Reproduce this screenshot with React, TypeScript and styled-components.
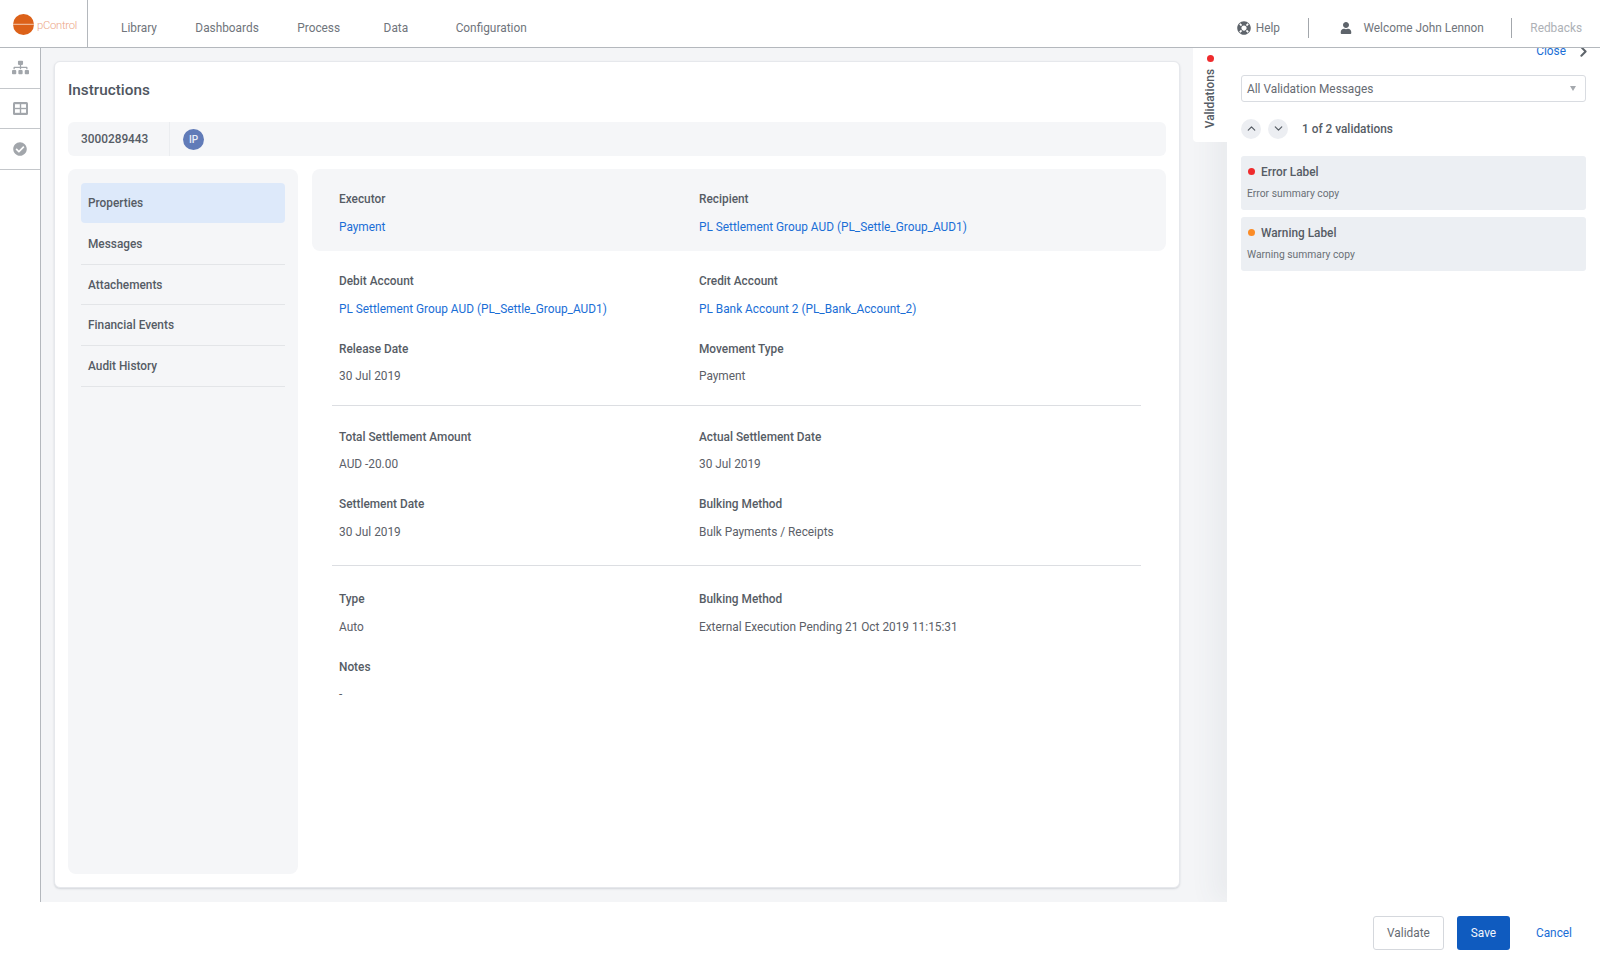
import React from 'react';
import styled, { createGlobalStyle } from 'styled-components';
import { FaSitemap, FaCheckCircle, FaLifeRing, FaUser } from 'react-icons/fa';
import { ChevronUp, ChevronDown, ChevronRight } from 'lucide-react';

const GlobalStyle = createGlobalStyle`
  html, body, #root {
    height: 100%;
    margin: 0;
  }
  body {
    font-family: Roboto, "Liberation Sans", sans-serif;
    font-size: 11.85px;
    color: #565c65;
    overflow: hidden;
  }
  * {
    box-sizing: border-box;
  }
`;

const Page = styled.div`
  display: flex;
  flex-direction: column;
  height: 963px;
  background: #fff;
`;

const Header = styled.header`
  display: flex;
  align-items: stretch;
  flex: 0 0 48px;
  background: #fff;
  border-bottom: 1.5px solid #b4b8bd;
  position: relative;
  z-index: 3;
`;

const LogoBlock = styled.div`
  display: flex;
  align-items: center;
  gap: 3px;
  width: 88px;
  padding: 1px 0 0 13px;
  border-right: 1px solid #b4b8bd;
`;

const LogoText = styled.span`
  font-size: 11.3px;
  letter-spacing: -0.3px;
  font-weight: 300;
  color: #eca585;
  margin-top: 3px;
`;

const Nav = styled.nav`
  display: flex;
  align-items: center;
  gap: 38.5px;
  padding: 8px 0 0 33px;
  flex: 1;
`;

const NavLink = styled.span<{ $wide?: boolean }>`
  color: #70757c;
  margin: ${(p) => (p.$wide ? '0 9px 0 5px' : '0')};
`;

const HeaderRight = styled.div`
  display: flex;
  align-items: center;
  padding: 8px 18px 0 0;
`;

const HelpLink = styled.span`
  display: flex;
  align-items: center;
  gap: 5px;
  color: #70757c;
  svg {
    color: #5e646b;
  }
`;

const HeaderDivider = styled.span<{ $gap: number; $before: number }>`
  width: 1.5px;
  height: 20px;
  background: #a3a7ac;
  margin: 0 ${(p) => p.$gap}px 0 ${(p) => p.$before}px;
`;

const UserLink = styled.span`
  display: flex;
  align-items: center;
  gap: 11px;
  color: #70757c;
  svg {
    color: #5e646b;
  }
`;

const Redbacks = styled.span`
  color: #adb1b6;
`;

const Body = styled.div`
  display: flex;
  flex: 1;
  min-height: 0;
`;

const Sidebar = styled.aside`
  flex: 0 0 41px;
  background: #fff;
  border-right: 1.5px solid #b4b8bd;
`;

const SideItem = styled.div`
  display: flex;
  align-items: center;
  justify-content: center;
  height: 40.5px;
  border-bottom: 1.5px solid #c4c7cb;
  color: #a2a6ab;
`;

const Main = styled.main`
  display: flex;
  flex: 1;
  gap: 13px;
  padding-left: 13px;
  background: #f4f5f7;
  min-width: 0;
`;

const Card = styled.section`
  display: flex;
  flex-direction: column;
  flex: 1;
  margin: 13px 0 14px;
  padding: 0 13px 13px;
  background: #fff;
  border: 1px solid #e6e8ec;
  border-radius: 6px;
  box-shadow: 0 1px 2px rgba(60, 70, 90, 0.18);
`;

const Title = styled.h1`
  margin: 13px 0 17px;
  font-size: 15.3px;
  line-height: 30px;
  font-weight: 500;
  color: #4f565f;
`;

const IdStrip = styled.div`
  display: flex;
  align-items: center;
  height: 34px;
  background: #f5f6f8;
  border-radius: 6px;
  margin-bottom: 13px;
`;

const IdCell = styled.div`
  display: flex;
  align-items: center;
  width: 102px;
  height: 100%;
  padding-left: 13px;
  border-right: 1px solid #ebedf0;
  font-weight: 500;
`;

const Badge = styled.span`
  display: flex;
  align-items: center;
  justify-content: center;
  width: 21px;
  height: 21px;
  margin-left: 13px;
  border-radius: 50%;
  background: #617bb8;
  color: #e9edf6;
  font-size: 10px;
  font-weight: 500;
`;

const Columns = styled.div`
  display: flex;
  flex: 1;
  gap: 14px;
  min-height: 0;
`;

const TabPanel = styled.div`
  flex: 0 0 230px;
  padding: 14px 13px;
  background: #f5f6f8;
  border-radius: 8px;
`;

const TabItem = styled.div<{ $active?: boolean }>`
  display: flex;
  align-items: center;
  height: ${(p) => (p.$active ? 40 : 40.7)}px;
  margin-bottom: ${(p) => (p.$active ? 1 : 0)}px;
  padding-left: 7px;
  font-weight: 500;
  background: ${(p) => (p.$active ? '#dde9fa' : 'transparent')};
  border-radius: ${(p) => (p.$active ? 4 : 0)}px;
  border-bottom: ${(p) => (p.$active ? 'none' : '1px solid #e3e5e8')};
`;

const Details = styled.div`
  flex: 1;
  min-width: 0;
`;

const Highlight = styled.div`
  padding: 20px 0 14.5px 27px;
  background: #f5f6f8;
  border-radius: 8px;
`;

const FieldSection = styled.div<{ $top: number; $bottom: number }>`
  display: flex;
  flex-direction: column;
  gap: 20px;
  padding: ${(p) => p.$top}px 0 ${(p) => p.$bottom}px 27px;
`;

const FieldRow = styled.div`
  display: grid;
  grid-template-columns: 360px 1fr;
`;

const Label = styled.div`
  line-height: 20px;
  margin-bottom: 7.5px;
  font-weight: 500;
`;

const Value = styled.div`
  line-height: 20px;
  color: #5b6068;
`;

const LinkValue = styled(Value)`
  color: #1a6ed6;
`;

const Rule = styled.hr`
  margin: 0 25px 0 20px;
  border: none;
  border-top: 1px solid #dcdee2;
`;

const Tab = styled.div`
  display: flex;
  flex-direction: column;
  align-items: center;
  flex: 0 0 34px;
  height: 94px;
  padding-top: 7px;
  background: #fff;
  border-bottom-left-radius: 4px;
  position: relative;
  z-index: 2;
`;

const TabDot = styled.span`
  width: 7px;
  height: 7px;
  margin-bottom: 7px;
  border-radius: 50%;
  background: #ef2b2d;
`;

const TabLabel = styled.span`
  writing-mode: vertical-rl;
  transform: rotate(180deg);
  font-weight: 500;
`;

const Drawer = styled.aside`
  flex: 0 0 373px;
  padding: 0 14px;
  background: #fff;
  overflow: hidden;
  box-shadow: -14px 0 24px rgba(70, 80, 100, 0.06);
  position: relative;
  z-index: 1;
`;

const CloseRow = styled.div`
  display: flex;
  align-items: center;
  justify-content: flex-end;
  gap: 9px;
  height: 16px;
  margin: -5px -6px 15.5px 0;
  color: #1a6ed6;
  svg {
    color: #5e646b;
  }
`;

const SelectBox = styled.div`
  display: flex;
  align-items: center;
  justify-content: space-between;
  height: 27px;
  padding: 1px 9px 0 5px;
  border: 1.5px solid #d9dce1;
  border-radius: 3px;
  color: #666b72;
`;

const Caret = styled.span`
  width: 0;
  height: 0;
  border-left: 3.5px solid transparent;
  border-right: 3.5px solid transparent;
  border-top: 5px solid #a5a9ae;
`;

const Pager = styled.div`
  display: flex;
  align-items: center;
  gap: 7px;
  height: 20px;
  margin: 17px 0;
`;

const RoundButton = styled.span`
  display: flex;
  align-items: center;
  justify-content: center;
  width: 20px;
  height: 20px;
  border-radius: 50%;
  background: #eceef2;
  color: #555b63;
`;

const PagerText = styled.span`
  margin-left: 7px;
  font-weight: 500;
`;

const Message = styled.div`
  height: 54px;
  margin-bottom: 7px;
  padding: 7px 6px 0;
  background: #eceff3;
  border-radius: 3px;
`;

const MessageTitle = styled.div`
  display: flex;
  align-items: center;
  gap: 6px;
  line-height: 18px;
  font-weight: 500;
`;

const Dot = styled.span<{ $color: string }>`
  width: 7px;
  height: 7px;
  margin-left: 1px;
  border-radius: 50%;
  background: ${(p) => p.$color};
`;

const MessageCopy = styled.div`
  margin-top: 6px;
  font-size: 10.3px;
  line-height: 14px;
  color: #6a6f76;
`;

const Footer = styled.footer`
  display: flex;
  align-items: center;
  justify-content: flex-end;
  gap: 13px;
  flex: 0 0 61px;
  padding: 0 28px 0 0;
  background: #fff;
  position: relative;
  z-index: 2;
`;

const OutlineButton = styled.button`
  width: 71px;
  height: 34px;
  font: inherit;
  color: #676c73;
  background: #fff;
  border: 1.5px solid #d5d8dd;
  border-radius: 3px;
`;

const PrimaryButton = styled.button`
  width: 53px;
  height: 34px;
  font: inherit;
  color: #f2f6fc;
  background: #0f5bbf;
  border: none;
  border-radius: 3px;
`;

const CancelLink = styled.span`
  margin-left: 13px;
  color: #1a6ed6;
`;

function LogoMark() {
  return (
    <svg width="21" height="21" viewBox="0 0 21 21">
      <circle cx="10.5" cy="10.5" r="10.5" fill="#dc6119" />
      <rect x="0" y="9.8" width="21" height="1" fill="#f4c9ae" />
    </svg>
  );
}

function TableIcon() {
  return (
    <svg width="15" height="13" viewBox="0 0 15 13">
      <rect width="15" height="13" rx="1.5" fill="#a2a6ab" />
      <rect x="2" y="2.2" width="4.8" height="3.6" fill="#fff" />
      <rect x="8.2" y="2.2" width="4.8" height="3.6" fill="#fff" />
      <rect x="2" y="7.2" width="4.8" height="3.6" fill="#fff" />
      <rect x="8.2" y="7.2" width="4.8" height="3.6" fill="#fff" />
    </svg>
  );
}

function Field({ label, value, link }: { label: string; value: string; link?: boolean }) {
  return (
    <div>
      <Label>{label}</Label>
      {link ? <LinkValue>{value}</LinkValue> : <Value>{value}</Value>}
    </div>
  );
}

const tabs = ['Messages', 'Attachements', 'Financial Events', 'Audit History'];

export default function App() {
  return (
    <Page>
      <GlobalStyle />
      <Header>
        <LogoBlock>
          <LogoMark />
          <LogoText>pControl</LogoText>
        </LogoBlock>
        <Nav>
          <NavLink>Library</NavLink>
          <NavLink>Dashboards</NavLink>
          <NavLink>Process</NavLink>
          <NavLink $wide>Data</NavLink>
          <NavLink>Configuration</NavLink>
        </Nav>
        <HeaderRight>
          <HelpLink>
            <FaLifeRing size={14} />
            Help
          </HelpLink>
          <HeaderDivider $before={28} $gap={31} />
          <UserLink>
            <FaUser size={12} />
            Welcome John Lennon
          </UserLink>
          <HeaderDivider $before={27} $gap={18} />
          <Redbacks>Redbacks</Redbacks>
        </HeaderRight>
      </Header>
      <Body>
        <Sidebar>
          <SideItem>
            <FaSitemap size={17} />
          </SideItem>
          <SideItem>
            <TableIcon />
          </SideItem>
          <SideItem>
            <FaCheckCircle size={14} />
          </SideItem>
        </Sidebar>
        <Main>
          <Card>
            <Title>Instructions</Title>
            <IdStrip>
              <IdCell>3000289443</IdCell>
              <Badge>IP</Badge>
            </IdStrip>
            <Columns>
              <TabPanel>
                <TabItem $active>Properties</TabItem>
                {tabs.map((t) => (
                  <TabItem key={t}>{t}</TabItem>
                ))}
              </TabPanel>
              <Details>
                <Highlight>
                  <FieldRow>
                    <Field label="Executor" value="Payment" link />
                    <Field label="Recipient" value="PL Settlement Group AUD (PL_Settle_Group_AUD1)" link />
                  </FieldRow>
                </Highlight>
                <FieldSection $top={20} $bottom={18.5}>
                  <FieldRow>
                    <Field label="Debit Account" value="PL Settlement Group AUD (PL_Settle_Group_AUD1)" link />
                    <Field label="Credit Account" value="PL Bank Account 2 (PL_Bank_Account_2)" link />
                  </FieldRow>
                  <FieldRow>
                    <Field label="Release Date" value="30 Jul 2019" />
                    <Field label="Movement Type" value="Payment" />
                  </FieldRow>
                </FieldSection>
                <Rule />
                <FieldSection $top={21} $bottom={23}>
                  <FieldRow>
                    <Field label="Total Settlement Amount" value="AUD -20.00" />
                    <Field label="Actual Settlement Date" value="30 Jul 2019" />
                  </FieldRow>
                  <FieldRow>
                    <Field label="Settlement Date" value="30 Jul 2019" />
                    <Field label="Bulking Method" value="Bulk Payments / Receipts" />
                  </FieldRow>
                </FieldSection>
                <Rule />
                <FieldSection $top={23.5} $bottom={20}>
                  <FieldRow>
                    <Field label="Type" value="Auto" />
                    <Field label="Bulking Method" value="External Execution Pending 21 Oct 2019 11:15:31" />
                  </FieldRow>
                  <FieldRow>
                    <Field label="Notes" value="-" />
                  </FieldRow>
                </FieldSection>
              </Details>
            </Columns>
          </Card>
          <Tab>
            <TabDot />
            <TabLabel>Validations</TabLabel>
          </Tab>
        </Main>
        <Drawer>
          <CloseRow>
            Close
            <ChevronRight size={17} strokeWidth={2.8} />
          </CloseRow>
          <SelectBox>
            All Validation Messages
            <Caret />
          </SelectBox>
          <Pager>
            <RoundButton>
              <ChevronUp size={13} strokeWidth={2.2} />
            </RoundButton>
            <RoundButton>
              <ChevronDown size={13} strokeWidth={2.2} />
            </RoundButton>
            <PagerText>1 of 2 validations</PagerText>
          </Pager>
          <Message>
            <MessageTitle>
              <Dot $color="#ef2b2d" />
              Error Label
            </MessageTitle>
            <MessageCopy>Error summary copy</MessageCopy>
          </Message>
          <Message>
            <MessageTitle>
              <Dot $color="#fb8c27" />
              Warning Label
            </MessageTitle>
            <MessageCopy>Warning summary copy</MessageCopy>
          </Message>
        </Drawer>
      </Body>
      <Footer>
        <OutlineButton>Validate</OutlineButton>
        <PrimaryButton>Save</PrimaryButton>
        <CancelLink>Cancel</CancelLink>
      </Footer>
    </Page>
  );
}
